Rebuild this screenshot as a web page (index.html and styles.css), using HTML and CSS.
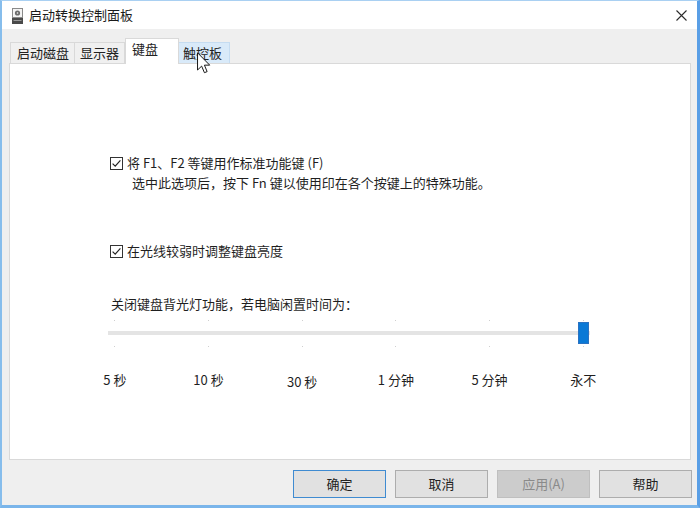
FILE: index.html
```html
<!DOCTYPE html>
<html lang="zh-CN">
<head>
<meta charset="utf-8">
<title>启动转换控制面板</title>
<link rel="stylesheet" href="styles.css">
</head>
<body>
<div class="window">
  <div class="titlebar">
    <svg class="app-icon" width="11" height="16" viewBox="0 0 11 16">
      <rect x="0.5" y="0.5" width="10" height="9" fill="#f4f4f4" stroke="#8a8a8a"/>
      <circle cx="5.5" cy="5" r="2.6" fill="#6b6b6b"/>
      <circle cx="5.5" cy="5" r="0.8" fill="#f4f4f4"/>
      <rect x="0" y="10" width="11" height="6" fill="#4a4a4a"/>
      <rect x="1.5" y="12" width="8" height="1" fill="#9a9a9a"/>
    </svg>
    <span class="title">启动转换控制面板</span>
    <svg class="close" width="11" height="11" viewBox="0 0 11 11">
      <path d="M0.5 0.5 L10.5 10.5 M10.5 0.5 L0.5 10.5" stroke="#2b2b2b" stroke-width="1.1" fill="none"/>
    </svg>
  </div>
  <div class="client">
    <div class="tabs">
      <div class="tab tab-disk">启动磁盘</div>
      <div class="tab tab-display">显示器</div>
      <div class="tab tab-active">键盘</div>
      <div class="tab tab-hover">触控板</div>
    </div>
    <div class="panel">
      <div class="option first">
        <svg class="check" width="13" height="13" viewBox="0 0 13 13">
          <rect x="0.5" y="0.5" width="12" height="12" fill="#fff" stroke="#333"/>
          <path d="M2.6 6.6 L5.2 9.1 L10.4 3.4" stroke="#222" stroke-width="1.2" fill="none"/>
        </svg>
        <span>将 F1、F2 等键用作标准功能键 (F)</span>
      </div>
      <div class="hint">选中此选项后，按下 Fn 键以使用印在各个按键上的特殊功能。</div>
      <div class="option second">
        <svg class="check" width="13" height="13" viewBox="0 0 13 13">
          <rect x="0.5" y="0.5" width="12" height="12" fill="#fff" stroke="#333"/>
          <path d="M2.6 6.6 L5.2 9.1 L10.4 3.4" stroke="#222" stroke-width="1.2" fill="none"/>
        </svg>
        <span>在光线较弱时调整键盘亮度</span>
      </div>
      <div class="slider-label">关闭键盘背光灯功能，若电脑闲置时间为：</div>
      <div class="slider">
        <div class="ticks"><i></i><i></i><i></i><i></i><i></i><i></i></div>
        <div class="track"><div class="thumb"></div></div>
        <div class="ticks bottom"><i></i><i></i><i></i><i></i><i></i><i></i></div>
        <div class="scale">
          <span>5 秒</span><span>10 秒</span><span class="low">30 秒</span><span>1 分钟</span><span>5 分钟</span><span>永不</span>
        </div>
      </div>
    </div>
    <div class="buttons">
      <div class="btn default">确定</div>
      <div class="btn">取消</div>
      <div class="btn disabled">应用(A)</div>
      <div class="btn">帮助</div>
    </div>
  </div>
  <svg class="cursor" width="14" height="22" viewBox="0 0 13 20">
    <path d="M0.5 0.5 L0.5 16.5 L4.3 12.9 L6.9 19 L9.4 18 L6.9 12 L11.8 12 Z" fill="#fff" stroke="#111" stroke-width="0.9" stroke-linejoin="round"/>
  </svg>
</div>
</body>
</html>
```
FILE: styles.css
```css
* { box-sizing: border-box; }
html, body { margin: 0; padding: 0; }
body {
  width: 700px;
  height: 508px;
  background: #fff;
  font-family: "Noto Sans CJK SC", "Noto Sans", sans-serif;
  color: #222;
  overflow: hidden;
}
.window {
  position: relative;
  width: 700px;
  height: 508px;
  border-left: 2px solid #86bdec;
  border-right: 3px solid #5a9fe6;
  border-bottom: 3px solid #7ab5ea;
  border-top: 1px solid #a9d0f2;
  display: flex;
  flex-direction: column;
}
.titlebar {
  height: 28px;
  background: #fff;
  display: flex;
  align-items: center;
  padding-left: 10px;
  flex: none;
}
.app-icon { margin-right: 6px; margin-top: 1px; }
.title { font-size: 13px; color: #1a1a1a; line-height: 18px; }
.close { margin-left: auto; margin-right: 10px; }
.client {
  flex: 1;
  background: #efefef;
  padding: 0 6px 0 7px;
  display: flex;
  flex-direction: column;
}
.tabs {
  height: 34px;
  display: flex;
  align-items: flex-end;
  padding-left: 1px;
  flex: none;
  position: relative;
  z-index: 1;
}
.tab {
  height: 21px;
  font-size: 13px;
  line-height: 19px;
  color: #222;
  border: 1px solid #d9d9d9;
  border-bottom: none;
  background: #f0f0f0;
  white-space: nowrap;
}
.tab-disk { width: 65px; padding-left: 6px; }
.tab-display { width: 50px; padding-left: 5px; border-left: none; }
.tab-active {
  width: 54px;
  height: 26px;
  margin-bottom: -1px;
  padding-left: 6px;
  line-height: 20px;
  background: #fff;
  border-color: #d9d9d9;
}
.tab-hover {
  width: 51px;
  padding-left: 4px;
  background: #d9eaf9;
  border-color: #c5dcf1;
  border-left: none;
}
.panel {
  height: 397px;
  background: #fff;
  border: 1px solid #d9d9d9;
  flex: none;
  font-size: 13px;
  line-height: 20px;
  color: #1f1f1f;
}
.option {
  display: flex;
  align-items: center;
  margin-left: 100px;
  height: 20px;
}
.option.first { margin-top: 89px; }
.option.second { margin-top: 48px; }
.check { margin-right: 4px; flex: none; }
.hint { margin-left: 122px; }
.slider-label { margin-left: 101px; margin-top: 33px; }
.slider {
  margin-left: 58px;
  width: 562px;
}
.ticks {
  margin-top: 6px;
  display: grid;
  grid-template-columns: repeat(6, 1fr);
  height: 1px;
}
.ticks i {
  display: block;
  width: 1px;
  height: 1px;
  justify-self: center;
  background: #cfcfcf;
}
.ticks.bottom { margin-top: 11px; }
.track {
  position: relative;
  margin-top: 10px;
  margin-left: 40px;
  width: 482px;
  height: 4px;
  background: #e4e4e4;
}
.thumb {
  position: absolute;
  left: 470px;
  top: -9px;
  width: 11px;
  height: 22px;
  background: #0a79d6;
  border: 1px solid #2a72c2;
}
.scale {
  margin-top: 23px;
  display: grid;
  grid-template-columns: repeat(6, 1fr);
  text-align: center;
  line-height: 20px;
}
.scale .low { position: relative; top: 2px; }
.buttons {
  display: flex;
  justify-content: flex-end;
  gap: 9px;
  margin-top: 10px;
  margin-right: -1px;
}
.btn {
  width: 93px;
  height: 28px;
  background: #e1e1e1;
  border: 1px solid #adadad;
  font-size: 13px;
  line-height: 25px;
  text-align: center;
  color: #222;
}
.btn.default { border-color: #3f8bd1; }
.btn.disabled { background: #cccccc; border-color: #bfbfbf; color: #8a8a8a; }
.cursor {
  position: absolute;
  left: 195px;
  top: 51px;
  z-index: 5;
}
```
